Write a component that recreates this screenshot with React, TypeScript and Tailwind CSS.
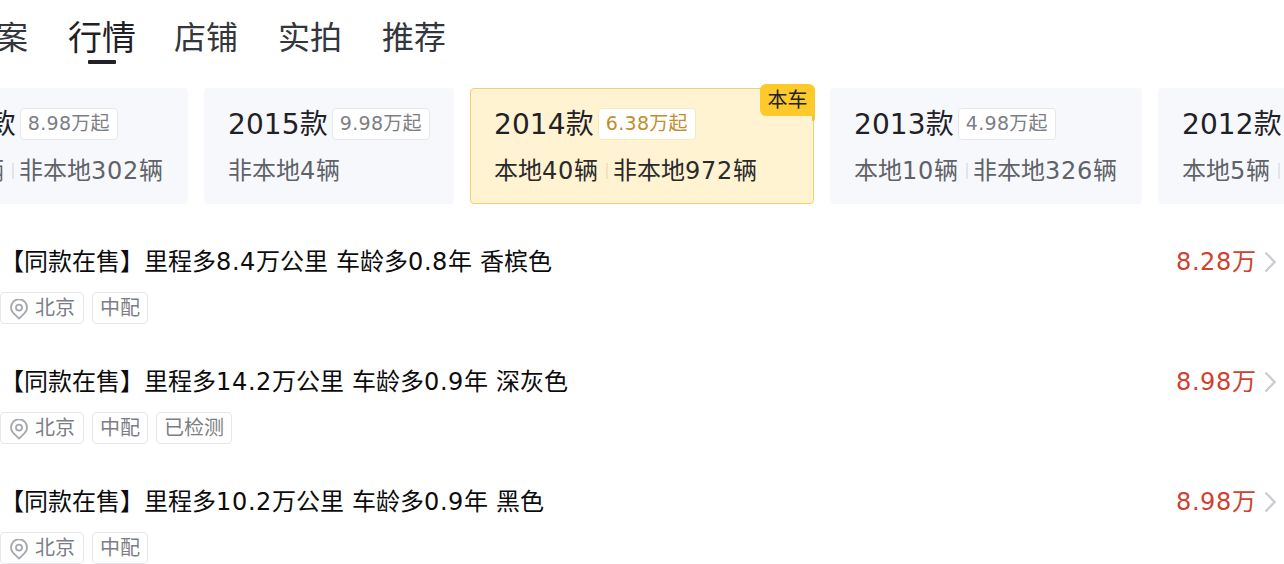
const font = { fontFamily: '"DejaVu Sans", "Noto Sans CJK SC", sans-serif' };

const tabs = ["案", "行情", "店铺", "实拍", "推荐"];

const years = [
  { year: "2016款", price: "8.98万起", local: "本地8辆", other: "非本地302辆", width: "w-[296px]" },
  { year: "2015款", price: "9.98万起", other: "非本地4辆", width: "w-[250px]" },
  { year: "2014款", price: "6.38万起", local: "本地40辆", other: "非本地972辆", width: "w-[344px]", active: true },
  { year: "2013款", price: "4.98万起", local: "本地10辆", other: "非本地326辆", width: "w-[312px]" },
  { year: "2012款", price: "3.98万起", local: "本地5辆", other: "非本地120辆", width: "w-[296px]" },
];

const cars = [
  { title: "【同款在售】里程多8.4万公里 车龄多0.8年 香槟色", price: "8.28万", tags: ["中配"] },
  { title: "【同款在售】里程多14.2万公里 车龄多0.9年 深灰色", price: "8.98万", tags: ["中配", "已检测"] },
  { title: "【同款在售】里程多10.2万公里 车龄多0.9年 黑色", price: "8.98万", tags: ["中配"] },
];

// digits and punctuation at 24px sit on whole-pixel advances in the reference
function Wide({ text }: { text: string }) {
  return (
    <>
      {text.split(/([0-9]+|[. ])/).map((part, i) =>
        /^[0-9]+$/.test(part) ? (
          <span key={i} className="tracking-[0.73px]">{part}</span>
        ) : /^[. ]$/.test(part) ? (
          <span key={i} className="tracking-[0.37px]">{part}</span>
        ) : (
          part
        )
      )}
    </>
  );
}

function YearCard({ item }: { item: (typeof years)[number] }) {
  return (
    <div
      className={`relative shrink-0 h-[116px] whitespace-nowrap rounded px-6 pt-5 ${item.width} ${
        item.active ? "bg-[#fff3d2] border border-[#f2d06f] pl-[23px] pt-[19px]" : "bg-[#f7f8fc]"
      }`}
    >
      {item.active && (
        <>
          <div className="absolute right-[-2px] top-[-5px] h-8 w-[55px] rounded-t-md rounded-bl-md bg-[#fdc92b] text-center text-[20px] leading-8 text-[#1f2126]">
            本车
          </div>
          <div className="absolute right-[-2px] top-[27px] h-[5px] w-[3px] rounded-br-sm bg-[#eec04a]" />
        </>
      )}
      <div className="flex items-center h-8">
        <span className="text-[28px] leading-9 translate-y-px tracking-[0.1px] text-[#1f2126]">{item.year}</span>
        <span
          className={`ml-1 h-8 rounded border bg-white px-[7px] text-[19px] leading-[28px] tracking-[0.3px] ${
            item.active ? "border-[#f8e8bb] text-[#c28e2a]" : "border-[#e6e7ea] text-[#7b7e84]"
          }`}
        >
          {item.price}
        </span>
      </div>
      <div className={`mt-[14px] flex items-center text-[24px] leading-[34px] ${item.active ? "text-[#2a2a2a]" : "text-[#5f6369]"}`}>
        {item.local && (
          <>
            <span><Wide text={item.local} /></span>
            <span className={`ml-2 mr-[5px] h-4 w-0.5 ${item.active ? "bg-[#f0e4c0]" : "bg-[#e2e4e9]"}`} />
          </>
        )}
        <span><Wide text={item.other} /></span>
      </div>
    </div>
  );
}

function Tag({ children, pin }: { children: React.ReactNode; pin?: boolean }) {
  return (
    <span className={`flex h-8 items-center rounded border border-[#e6e7ea] text-[20px] text-[#7b7e84] ${pin ? "gap-[7px] pl-[9px] pr-2" : "px-[7px]"}`}>
      {children}
    </span>
  );
}

function PinIcon() {
  return (
    <svg width="18" height="21" viewBox="0 0 18 21" fill="none" stroke="#a6a9af" strokeWidth="1.9" className="mt-[3px]">
      <path d="M9 19.6 L3.2 13.9 A8 8 0 1 1 14.8 13.9 Z" strokeLinejoin="round" />
      <circle cx="9" cy="8.6" r="3" />
    </svg>
  );
}

export default function App() {
  return (
    <div className="h-[564px] w-[1284px] overflow-hidden bg-white" style={font}>
      <div className="ml-[-4px] flex h-[88px] gap-10">
        {tabs.map((t) => (
          <div key={t} className={`relative ${t === "行情" ? "mr-[-2px]" : ""}`}>
            <div className={`pt-[18px] leading-10 ${t === "行情" ? "text-[34px] text-[#1f2126]" : "text-[32px] text-[#33363b]"}`}>{t}</div>
            {t === "行情" && <div className="absolute left-5 top-[60px] h-1 w-7 rounded-[1px] bg-[#1f2126]" />}
          </div>
        ))}
      </div>

      <div className="ml-[-108px] flex gap-4">
        {years.map((y) => (
          <YearCard key={y.year} item={y} />
        ))}
      </div>

      <div className="mt-10">
        {cars.map((c) => (
          <div key={c.title} className="h-[120px]">
            <div className="flex h-9 items-center justify-between pr-2">
              <span className="text-[24px] leading-9 text-[#0c0c0c]"><Wide text={c.title} /></span>
              <span className="flex items-center gap-2 text-[24px] text-[#d1412f]">
                <span><Wide text={c.price} /></span>
                <svg width="12" height="22" viewBox="0 0 12 22" fill="none" stroke="#cbced3" strokeWidth="2.4">
                  <path d="M1.5 1.5 L10.5 11 L1.5 20.5" />
                </svg>
              </span>
            </div>
            <div className="mt-[12px] flex gap-2">
              <Tag pin>
                <PinIcon />
                北京
              </Tag>
              {c.tags.map((t) => (
                <Tag key={t}>{t}</Tag>
              ))}
            </div>
          </div>
        ))}
      </div>
    </div>
  );
}
